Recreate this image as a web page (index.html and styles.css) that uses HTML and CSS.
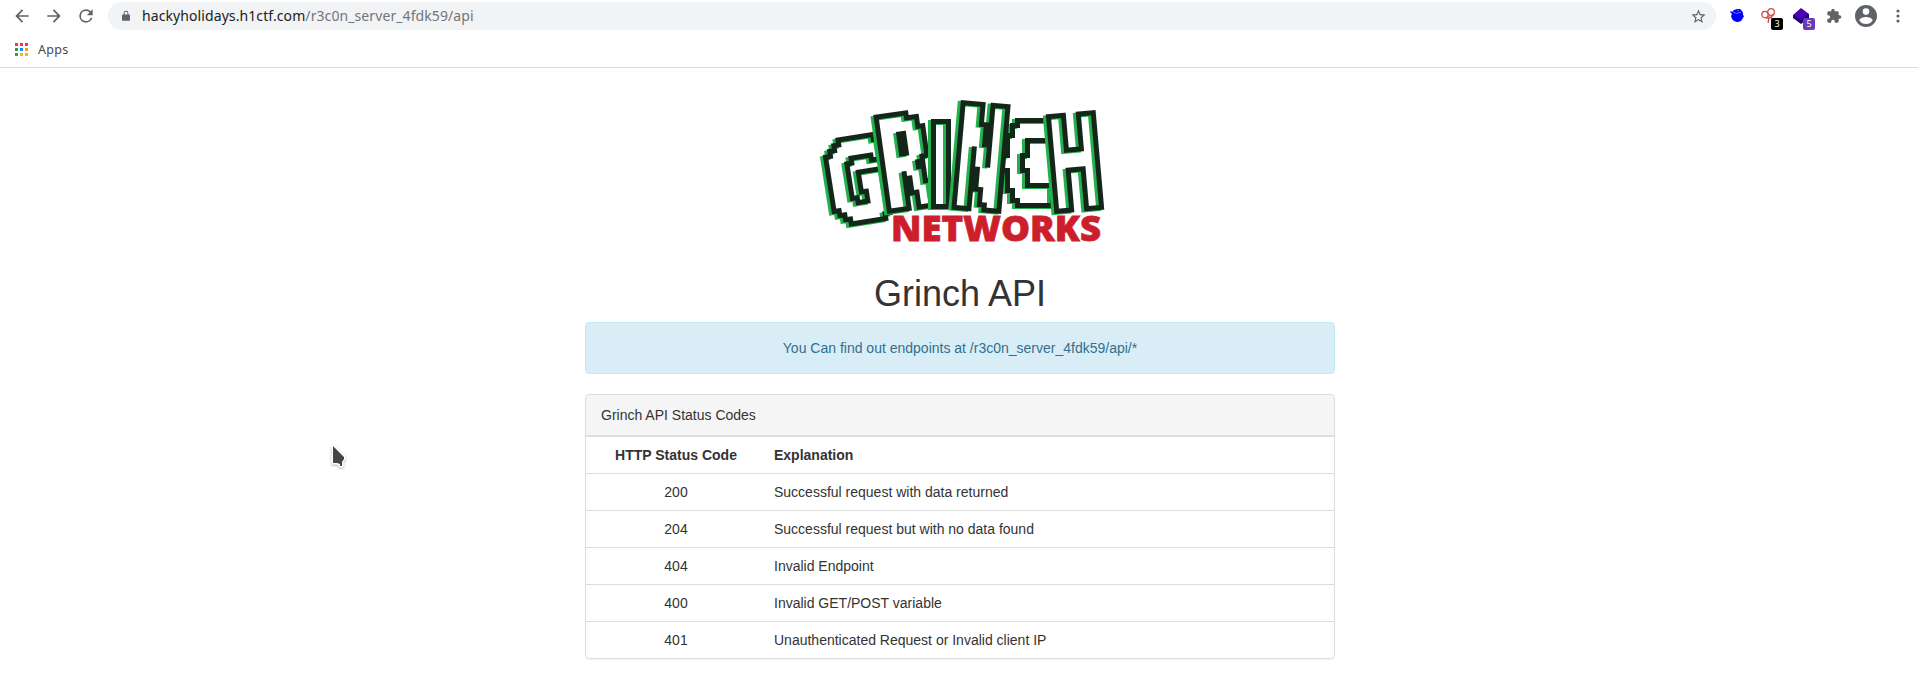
FILE: index.html
```html
<!DOCTYPE html>
<html lang="en">
<head>
<meta charset="utf-8">
<title>Grinch API</title>
<link rel="stylesheet" href="styles.css">
</head>
<body>
<header class="browser">
  <div class="toolbar">
    <svg class="nav-icon" viewBox="0 0 24 24"><path d="M20 11H7.83l5.59-5.59L12 4l-8 8 8 8 1.41-1.41L7.83 13H20v-2z"/></svg>
    <svg class="nav-icon" viewBox="0 0 24 24"><path d="M12 4l-1.41 1.41L16.17 11H4v2h12.17l-5.58 5.59L12 20l8-8z"/></svg>
    <svg class="nav-icon" viewBox="0 0 24 24"><path d="M17.65 6.35A7.96 7.96 0 0 0 12 4a8 8 0 1 0 7.73 10h-2.08A6 6 0 1 1 12 6c1.66 0 3.14.69 4.22 1.78L13 11h7V4z"/></svg>
    <div class="omnibox">
      <svg class="lock" viewBox="0 0 10 14"><path d="M9 5H8V3.500a3 3 0 0 0-6 0V5H1a1 1 0 0 0-1 1v6a1 1 0 0 0 1 1h8a1 1 0 0 0 1-1V6a1 1 0 0 0-1-1zM3.200 5V3.500a1.800 1.800 0 0 1 3.600 0V5z"/></svg>
      <span class="url"><span class="host">hackyholidays.h1ctf.com</span>/r3c0n_server_4fdk59/api</span>
      <svg class="star" viewBox="0 0 24 24"><path d="M22 9.240l-7.190-.62L12 2 9.190 8.630 2 9.240l5.460 4.730L5.820 21 12 17.270 18.180 21l-1.630-7.030zM12 15.400l-3.760 2.270 1-4.280-3.320-2.880 4.380-.38L12 6.100l1.710 4.040 4.380.38-3.320 2.880 1 4.280z"/></svg>
    </div>
    <div class="extensions">
      <svg class="ext" viewBox="0 0 14 14"><path fill="#00f" d="M1 3l1 1 2-2 3-1h3l2 2 1 2v2l1 1-1 2-2 3-3 1H7l-3-1-2-2-1-3 1-2-2-2z"/><path d="M3 4q3 3 8 0M7 2l2 1" fill="none" stroke="#9af" stroke-width=".7"/></svg>
      <span class="badged"><svg class="ext" viewBox="0 0 16 16" fill="none" stroke="#cf4b48" stroke-width="1.300"><circle cx="4" cy="6.500" r="3.200"/><circle cx="10" cy="4" r="3.300"/><path d="M5 10q5 1 8-4M8 8v2l-1 5M9 9l4 3"/></svg><b class="badge badge-dark">3</b></span>
      <span class="badged"><svg class="ext" viewBox="0 0 16 16"><path fill="#20007a" d="M0 7v3l8 6 8-6V6z"/><path fill="#4b00b4" d="M8 0l8 6-8 6-8-5z"/></svg><b class="badge badge-purple">5</b></span>
      <svg class="puzzle" viewBox="0 0 24 24"><path d="M20.500 11H19V7c0-1.100-.9-2-2-2h-4V3.500a2.500 2.500 0 0 0-5 0V5H4c-1.100 0-2 .9-2 2v3.800h1.500a2.700 2.700 0 0 1 0 5.400H2V20c0 1.100.9 2 2 2h3.800v-1.500a2.700 2.700 0 0 1 5.400 0V22H17c1.100 0 2-.9 2-2v-4h1.500a2.500 2.500 0 0 0 0-5z"/></svg>
      <svg class="avatar" viewBox="2 2 20 20"><path d="M12 2a10 10 0 1 0 0 20 10 10 0 0 0 0-20zm0 3a3 3 0 1 1 0 6 3 3 0 0 1 0-6zm0 14.200a7.200 7.200 0 0 1-6-3.220c.03-1.990 4-3.080 6-3.080s5.970 1.090 6 3.080a7.200 7.200 0 0 1-6 3.220z"/></svg>
      <svg class="menu" viewBox="0 0 4 14"><circle cx="2" cy="2" r="1.600"/><circle cx="2" cy="7" r="1.600"/><circle cx="2" cy="12" r="1.600"/></svg>
    </div>
  </div>
  <div class="bookmarks">
    <span class="apps-grid"><i class="red"></i><i class="red"></i><i class="red"></i><i class="green"></i><i class="blue"></i><i class="orange"></i><i class="green"></i><i class="yellow"></i><i class="yellow"></i></span>
    <span class="apps-label">Apps</span>
  </div>
</header>
<main class="page">
  <svg class="logo" viewBox="815 90 300 160" role="img" aria-label="Grinch Networks">
    <defs>
      <filter id="block" filterUnits="userSpaceOnUse" x="-50" y="-70" width="100" height="140" color-interpolation-filters="sRGB">
        <!-- sample one point per 5px cell, then grow each sample into a full block -->
        <feFlood x="-48" y="-68" width="1" height="1" flood-color="#fff" result="dot"/>
        <feOffset in="dot" x="-50" y="-70" width="5" height="5" result="cell"/>
        <feTile in="cell" result="grid"/>
        <feComposite in="SourceGraphic" in2="grid" operator="in"/>
        <feComponentTransfer><feFuncA type="discrete" tableValues="0 1"/></feComponentTransfer>
        <feMorphology operator="dilate" radius="2" result="pixels"/>
        <feMorphology in="pixels" operator="dilate" radius="5" result="fat"/>
        <feComposite in="fat" in2="pixels" operator="out" result="ring"/>
        <feFlood flood-color="#23b14d"/>
        <feComposite in2="ring" operator="in"/>
        <feOffset dx="-3" dy="1" result="edge"/>
        <feFlood flood-color="#14261a"/>
        <feComposite in2="ring" operator="in" result="outline"/>
        <feMerge><feMergeNode in="pixels"/><feMergeNode in="edge"/><feMergeNode in="outline"/></feMerge>
      </filter>
    </defs>
    <g class="block-letters">
      <g transform="translate(857 180) rotate(-9)" filter="url(#block)"><text transform="scale(.66 .98)" y="41">G</text></g>
      <g transform="translate(905 161) rotate(-8)" filter="url(#block)"><text class="mono" transform="scale(.72 1.070)" y="41">R</text></g>
      <g transform="translate(941 164)" filter="url(#block)"><text transform="scale(.7 .98)" y="41">I</text></g>
      <g transform="translate(1030 163)" filter="url(#block)"><text transform="scale(.64 .98)" y="41">C</text></g>
      <g transform="translate(981 157) rotate(5)" filter="url(#block)"><text transform="scale(.6 1.200)" y="41">N</text></g>
      <g transform="translate(1075 162) rotate(-5)" filter="url(#block)"><text transform="scale(.6 1.100)" y="41">H</text></g>
    </g>
    <text class="networks" x="891" y="241" textLength="210" lengthAdjust="spacingAndGlyphs">NETWORKS</text>
  </svg>
  <h1>Grinch API</h1>
  <div class="alert">You Can find out endpoints at /r3c0n_server_4fdk59/api/*</div>
  <section class="panel">
    <div class="panel-heading">Grinch API Status Codes</div>
    <table>
      <thead><tr><th class="code">HTTP Status Code</th><th>Explanation</th></tr></thead>
      <tbody>
        <tr><td class="code">200</td><td>Successful request with data returned</td></tr>
        <tr><td class="code">204</td><td>Successful request but with no data found</td></tr>
        <tr><td class="code">404</td><td>Invalid Endpoint</td></tr>
        <tr><td class="code">400</td><td>Invalid GET/POST variable</td></tr>
        <tr><td class="code">401</td><td>Unauthenticated Request or Invalid client IP</td></tr>
      </tbody>
    </table>
  </section>
</main>
<svg class="cursor" viewBox="0 0 18 25"><path d="M3 1v17h4l3 1v2h2v-4l2-3v-2z" fill="#454545" stroke="#fff" stroke-width="3" paint-order="stroke"/></svg>
</body>
</html>
```
FILE: styles.css
```css
* { box-sizing: border-box; }
body {
  margin: 0;
  height: 677px;
  overflow: hidden;
  background: #fff;
  color: #333;
  font: 14px/20px "Liberation Sans", Arial, sans-serif;
}
svg { display: block; flex: none; }

.browser {
  height: 68px;
  border-bottom: 1px solid #dadce0;
  font-family: "Noto Sans", sans-serif;
  fill: #5f6368;
}
.toolbar { display: flex; align-items: center; height: 32px; padding-left: 12px; }
.nav-icon { width: 20px; height: 20px; margin-right: 12px; }
.omnibox {
  display: flex;
  align-items: center;
  width: 1608px;
  height: 28px;
  padding: 0 9px 0 14px;
  border-radius: 14px;
  background: #f1f3f4;
}
.lock { width: 8px; height: 12px; }
.url { margin-left: 12px; color: #72767a; font-size: 14px; letter-spacing: .09px; white-space: nowrap; }
.host { color: #202124; }
.star { width: 17px; height: 17px; margin-left: auto; }
.extensions { display: flex; align-items: center; }
.ext { width: 16px; height: 16px; }
.extensions > .ext { width: 14px; height: 14px; margin: 0 0 2px 14px; }
.badged { position: relative; margin-left: 17px; }
.badged + .badged { margin-left: 16px; }
.badge {
  position: absolute;
  left: 10px;
  top: 10px;
  width: 12px;
  height: 12px;
  border-radius: 2px;
  color: #fff;
  font: 9px/12px "Noto Sans", sans-serif;
  text-align: center;
}
.badge-dark { background: #000; }
.badge-purple { background: #673ab7; }
.puzzle { width: 16px; height: 16px; margin-left: 17px; }
.avatar { width: 22px; height: 22px; margin-left: 13px; }
.menu { width: 4px; height: 14px; margin-left: 19px; }
.bookmarks {
  display: flex;
  align-items: center;
  gap: 10px;
  height: 35px;
  padding-left: 15px;
  color: #46494d;
  font-size: 12px;
}
.apps-grid { display: grid; grid-template-columns: repeat(3, 3px); gap: 2px; }
.apps-label { font-size: 12.5px; letter-spacing: .3px; }
.apps-grid i { height: 3px; }
.red { background: #f33; }
.green { background: #2a9d57; }
.blue { background: #1a85f8; }
.orange { background: #f09c10; }
.yellow { background: #fbb60a; }

.page { width: 752px; margin: 0 auto; padding: 22px 0 0 2px; }
.logo { width: 300px; height: 160px; margin-left: 230px; overflow: visible; }
.block-letters text {
  font: bold 112px "DejaVu Sans", sans-serif;
  text-anchor: middle;
  fill: #fff;
}
.block-letters .mono { font-family: "DejaVu Sans Mono", monospace; }
.networks { font: 800 36px "Open Sans", sans-serif; fill: #cd1f2b; stroke: #cd1f2b; stroke-width: .8px; }
h1 { margin: 24px 0 8px; font-size: 36px; font-weight: 500; line-height: 40px; text-align: center; }
.alert {
  margin-bottom: 20px;
  padding: 15px;
  border: 1px solid #bce8f1;
  border-radius: 4px;
  background: #d9edf7;
  color: #31708f;
  text-align: center;
}
.panel { border: 1px solid #ddd; border-radius: 4px; box-shadow: 0 1px 1px rgba(0, 0, 0, .05); }
.panel-heading { padding: 10px 15px; border-bottom: 1px solid #ddd; border-radius: 3px 3px 0 0; background: #f5f5f5; }
table { width: 100%; border-collapse: separate; border-spacing: 0; table-layout: fixed; }
th, td { padding: 8px; border-top: 1px solid #ddd; text-align: left; }
.code { width: 180px; text-align: center; }
.cursor {
  position: absolute;
  left: 330px;
  top: 445px;
  width: 18px;
  height: 25px;
  filter: drop-shadow(0 1px 1px rgba(0, 0, 0, .3));
}
```
